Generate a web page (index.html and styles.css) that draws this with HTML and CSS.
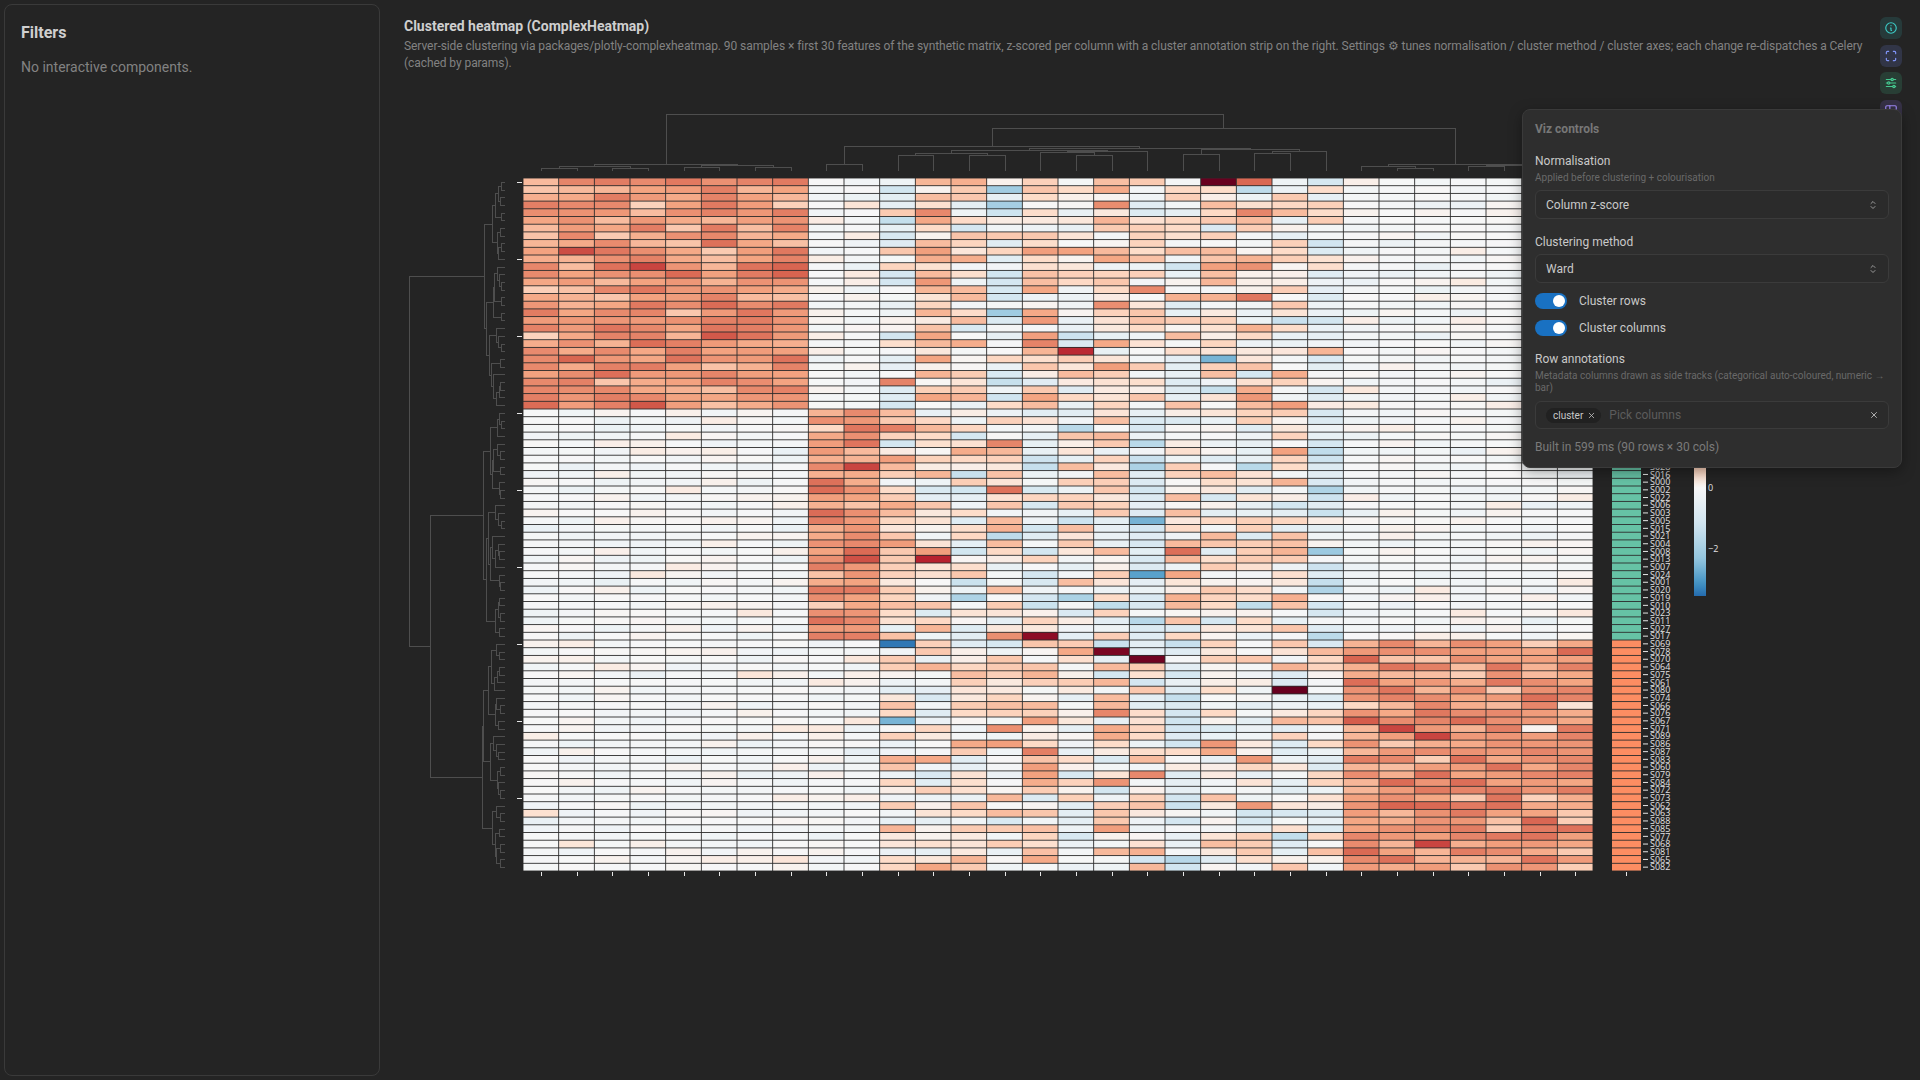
FILE: index.html
```html
<!DOCTYPE html>
<html lang="en">
<head>
<meta charset="utf-8">
<title>Clustered heatmap (ComplexHeatmap)</title>
<link rel="stylesheet" href="styles.css">
</head>
<body>
<div class="app">
  <aside class="sidebar">
    <h2 class="sidebar-title">Filters</h2>
    <p class="sidebar-empty">No interactive components.</p>
  </aside>
  <main class="main">
    <div class="content">
      <header class="viz-header">
        <h1 class="viz-title">Clustered heatmap (ComplexHeatmap)</h1>
        <p class="viz-desc">Server-side clustering via packages/plotly-complexheatmap. 90 samples × first 30 features of the synthetic matrix, z-scored per column with a cluster annotation strip on the right. Settings ⚙ tunes normalisation / cluster method / cluster axes; each change re-dispatches a Celery (cached by params).</p>
      </header>
      <svg id="hm" class="chart" xmlns="http://www.w3.org/2000/svg"></svg>
    </div>
    <div class="toolbar">
      <button class="tool tool-teal" aria-label="Info">
        <svg viewBox="0 0 24 24"><circle cx="12" cy="12" r="9"/><path d="M12 8h.01M11 12h1v4h1"/></svg>
      </button>
      <button class="tool tool-indigo" aria-label="Fullscreen">
        <svg viewBox="0 0 24 24"><path d="M4 8V6a2 2 0 0 1 2-2h2M4 16v2a2 2 0 0 0 2 2h2M16 4h2a2 2 0 0 1 2 2v2M16 20h2a2 2 0 0 0 2-2v-2"/></svg>
      </button>
      <button class="tool tool-green" aria-label="Settings">
        <svg viewBox="0 0 24 24"><circle cx="14" cy="6" r="2"/><path d="M4 6h8M16 6h4"/><circle cx="8" cy="12" r="2"/><path d="M4 12h2M10 12h10"/><circle cx="17" cy="18" r="2"/><path d="M4 18h11M19 18h1"/></svg>
      </button>
      <button class="tool tool-violet" aria-label="Data">
        <svg viewBox="0 0 24 24"><rect x="3" y="3" width="18" height="18" rx="2"/><path d="M3 10h18M10 3v18"/></svg>
      </button>
    </div>

    <section class="popover">
      <h3 class="pop-title">Viz controls</h3>

      <div class="field field-first">
        <div class="field-label">Normalisation</div>
        <div class="field-desc">Applied before clustering + colourisation</div>
        <div class="select select-after-desc">
          <span>Column z-score</span>
          <svg class="chev" viewBox="0 0 24 24"><path d="M8 9l4-4 4 4M16 15l-4 4-4-4"/></svg>
        </div>
      </div>

      <div class="field">
        <div class="field-label">Clustering method</div>
        <div class="select select-after-label">
          <span>Ward</span>
          <svg class="chev" viewBox="0 0 24 24"><path d="M8 9l4-4 4 4M16 15l-4 4-4-4"/></svg>
        </div>
      </div>

      <div class="switches">
        <div class="switch-row"><span class="switch"><span class="knob"></span></span><span class="switch-label">Cluster rows</span></div>
        <div class="switch-row"><span class="switch"><span class="knob"></span></span><span class="switch-label">Cluster columns</span></div>
      </div>

      <div class="field">
        <div class="field-label">Row annotations</div>
        <div class="field-desc field-desc-wrap">Metadata columns drawn as side tracks (categorical auto-coloured, numeric → bar)</div>
        <div class="multiselect">
          <span class="chip">cluster<svg class="chip-x" viewBox="0 0 24 24"><path d="M18 6L6 18M6 6l12 12"/></svg></span>
          <span class="placeholder">Pick columns</span>
          <svg class="clear-x" viewBox="0 0 24 24"><path d="M18 6L6 18M6 6l12 12"/></svg>
        </div>
      </div>

      <div class="built">Built in 599 ms (90 rows × 30 cols)</div>
    </section>
  </main>
</div>
<script src="script.js"></script>
</body>
</html>
```

FILE: styles.css
```css
* { box-sizing: border-box; }

html, body {
  margin: 0;
  background: #242424;
}

body {
  font-family: Roboto, "Liberation Sans", Arial, sans-serif;
  color: #c9c9c9;
  overflow: hidden;
}

.app {
  display: flex;
  gap: 24px;
  padding: 4px;
  height: 1080px;
}

/* Sidebar */
.sidebar {
  width: 376px;
  flex: none;
  border: 1px solid #3a3a3a;
  border-radius: 8px;
  padding: 17px 16px 16px;
}

.sidebar-title {
  margin: 0;
  font-size: 16px;
  line-height: 22px;
  font-weight: 700;
  color: #cfcfcf;
}

.sidebar-empty {
  margin: 13px 0 0;
  font-size: 14px;
  line-height: 20px;
  color: #828282;
}

/* Main */
.main {
  flex: 1;
  min-width: 0;
  position: relative;
  display: flex;
  gap: 4px;
  padding: 12px 14px 0 0;
}

.content {
  flex: 1;
  min-width: 0;
}

.viz-title {
  margin: 0;
  font-size: 14px;
  line-height: 20px;
  font-weight: 700;
  color: #cfcfcf;
}

.viz-desc {
  margin: 2px -4px 0 0;
  font-size: 12px;
  line-height: 17px;
  letter-spacing: -0.07px;
  color: #828282;
}

.chart {
  display: block;
  width: 100%;
  height: 840px;
  margin-top: 6px;
  overflow: visible;
}

/* Toolbar */
.toolbar {
  flex: none;
  display: flex;
  flex-direction: column;
  gap: 5.5px;
  padding-top: 1px;
}

.tool {
  width: 22px;
  height: 22px;
  padding: 0;
  border: 0;
  border-radius: 6px;
  display: flex;
  align-items: center;
  justify-content: center;
}

.tool svg {
  width: 14px;
  height: 14px;
  fill: none;
  stroke: currentColor;
  stroke-width: 2;
  stroke-linecap: round;
  stroke-linejoin: round;
}

.tool-teal { background: rgba(56, 201, 196, 0.14); color: #3cc9c4; }
.tool-indigo { background: rgba(116, 143, 252, 0.16); color: #8297fc; }
.tool-green { background: rgba(64, 201, 143, 0.16); color: #45c990; }
.tool-violet { background: rgba(151, 117, 250, 0.16); color: #a08af8; }

/* Popover */
.popover {
  position: absolute;
  top: 105px;
  right: 14px;
  width: 380px;
  z-index: 10;
  background: #2e2e2e;
  border: 1px solid #3a3a3a;
  border-radius: 8px;
  padding: 11px 12px 12px;
  box-shadow: 0 4px 14px rgba(0, 0, 0, 0.35);
}

.pop-title {
  margin: 0;
  font-size: 12px;
  line-height: 16px;
  font-weight: 700;
  color: #777777;
}

.field { margin-top: 15px; }
.field-first { margin-top: 16px; }

.field-label {
  font-size: 12px;
  line-height: 16px;
  color: #c9c9c9;
}

.field-desc {
  margin-top: 2px;
  font-size: 10px;
  line-height: 13px;
  color: #696969;
}

.field-desc-wrap {
  margin-top: 3px;
  line-height: 12px;
}

.select {
  height: 29px;
  border: 1px solid #3b3b3b;
  border-radius: 6px;
  background: #2b2b2b;
  display: flex;
  align-items: center;
  justify-content: space-between;
  padding: 0 9px 0 10px;
  font-size: 12px;
  color: #c9c9c9;
}

.select-after-desc { margin-top: 6px; }
.select-after-label { margin-top: 4px; }

.chev {
  width: 12px;
  height: 12px;
  fill: none;
  stroke: #9a9a9a;
  stroke-width: 2;
  stroke-linecap: round;
  stroke-linejoin: round;
}

.switches {
  margin-top: 10px;
  display: flex;
  flex-direction: column;
  gap: 11px;
}

.switch-row {
  display: flex;
  align-items: center;
  gap: 12px;
  height: 16px;
}

.switch {
  width: 32px;
  height: 16px;
  border-radius: 8px;
  background: #1971c2;
  display: flex;
  align-items: center;
  justify-content: flex-end;
  padding-right: 2px;
}

.knob {
  width: 12px;
  height: 12px;
  border-radius: 50%;
  background: #ffffff;
}

.switch-label {
  font-size: 12px;
  line-height: 16px;
  color: #c9c9c9;
}

.multiselect {
  margin-top: 7px;
  height: 28px;
  border: 1px solid #3b3b3b;
  border-radius: 6px;
  background: #2b2b2b;
  display: flex;
  align-items: center;
  padding: 0 9px 0 10px;
}

.chip {
  display: inline-flex;
  align-items: center;
  gap: 4px;
  height: 15px;
  padding: 0 5px 0 7px;
  border-radius: 8px;
  background: #212121;
  font-size: 10px;
  color: #c9c9c9;
}

.chip-x {
  width: 9px;
  height: 9px;
  fill: none;
  stroke: #c9c9c9;
  stroke-width: 2;
  stroke-linecap: round;
}

.placeholder {
  margin-left: 8px;
  flex: 1;
  font-size: 12px;
  color: #5c5c5c;
}

.clear-x {
  width: 10px;
  height: 10px;
  fill: none;
  stroke: #c9c9c9;
  stroke-width: 2;
  stroke-linecap: round;
}

.built {
  margin-top: 10px;
  font-size: 12px;
  line-height: 16px;
  color: #7a7a7a;
}

/* Chart text */
.hm-label {
  font-family: "Open Sans", "DejaVu Sans", Arial, sans-serif;
  font-size: 9px;
  fill: #e2e2e2;
}
```

FILE: script.js
```js
(function () {
  var NS = 'http://www.w3.org/2000/svg';
  var svg = document.getElementById('hm');
  var box = svg.getBoundingClientRect();
  svg.setAttribute('viewBox', box.left + ' ' + box.top + ' ' + box.width + ' ' + box.height);

  function mulberry(seed) {
    return function () {
      seed |= 0; seed = seed + 0x6D2B79F5 | 0;
      var t = Math.imul(seed ^ seed >>> 15, 1 | seed);
      t = t + Math.imul(t ^ t >>> 7, 61 | t) ^ t;
      return ((t ^ t >>> 14) >>> 0) / 4294967296;
    };
  }
  var rand = mulberry(20240611);
  function gauss() {
    var u = rand() || 1e-9, v = rand();
    return Math.sqrt(-2 * Math.log(u)) * Math.cos(2 * Math.PI * v);
  }
  function el(tag, attrs, parent) {
    var e = document.createElementNS(NS, tag);
    for (var k in attrs) e.setAttribute(k, attrs[k]);
    (parent || svg).appendChild(e);
    return e;
  }

  var X0 = 523, X1 = 1593, Y0 = 178, Y1 = 871, NC = 30, NR = 90;
  var CW = (X1 - X0) / NC, RH = (Y1 - Y0) / NR;

  var POS = [[0, [247, 247, 247]], [0.12, [253, 219, 199]], [0.35, [244, 165, 130]], [0.6, [214, 96, 77]], [0.8, [178, 24, 43]], [1, [103, 0, 31]]];
  var NEG = [[0, [247, 247, 247]], [0.3, [209, 229, 240]], [0.6, [146, 197, 222]], [0.8, [67, 147, 195]], [0.92, [33, 102, 172]], [1, [5, 48, 97]]];
  function color(v) {
    var s = v >= 0 ? POS : NEG;
    var t = Math.min(1, Math.abs(v) / (v >= 0 ? 4 : 3.9));
    for (var i = 1; i < s.length; i++) {
      if (t <= s[i][0]) {
        var a = s[i - 1], b = s[i], f = (t - a[0]) / (b[0] - a[0]);
        var c = [0, 1, 2].map(function (k) { return Math.round(a[1][k] + (b[1][k] - a[1][k]) * f); });
        return 'rgb(' + c.join(',') + ')';
      }
    }
    var l = s[s.length - 1][1];
    return 'rgb(' + l.join(',') + ')';
  }

  /* ---- data ---- */
  var bias = [];
  for (var g = 0; g < 3; g++) {
    bias[g] = [];
    for (var c = 0; c < NC; c++) bias[g][c] = 0.4 * gauss();
  }
  function value(r, c) {
    var g = r < 30 ? 0 : r < 60 ? 1 : 2;
    var hi = (g === 0 && c < 8) || (g === 1 && (c === 8 || c === 9)) || (g === 2 && c >= 23);
    if (hi) {
      var hv = 1.6 + 0.42 * gauss();
      return Math.min(hv, 2.7);
    }
    if (c >= 10 && c <= 22) return bias[g][c] + 0.62 * gauss();
    return -0.07 + 0.13 * gauss();
  }
  var data = [];
  for (var r = 0; r < NR; r++) {
    data[r] = [];
    for (var c2 = 0; c2 < NC; c2++) data[r][c2] = value(r, c2);
  }
  data[0][19] = 4.6; data[1][20] = -1.5; data[23][19] = -2.6; data[60][10] = -3.4;
  data[59][14] = 3.6; data[61][16] = 3.8; data[62][17] = 3.9; data[66][21] = 4.2;
  data[51][17] = -2.9; data[22][15] = 3.0; data[49][11] = 3.1; data[70][10] = -2.6;

  /* ---- cells ---- */
  el('rect', { x: X0, y: Y0, width: X1 - X0, height: Y1 - Y0, fill: '#2c2c2c' });
  var cells = el('g', {});
  for (var r2 = 0; r2 < NR; r2++) {
    for (var c3 = 0; c3 < NC; c3++) {
      el('rect', {
        x: (X0 + c3 * CW + 0.45).toFixed(2), y: (Y0 + r2 * RH + 0.45).toFixed(2),
        width: (CW - 0.9).toFixed(2), height: (RH - 0.9).toFixed(2),
        fill: color(data[r2][c3])
      }, cells);
    }
  }

  /* ---- annotation strip ---- */
  var AX0 = 1612, AX1 = 1641;
  el('rect', { x: AX0, y: Y0, width: AX1 - AX0, height: Y1 - Y0, fill: '#2c2c2c' });
  var ann = el('g', {});
  for (var r3 = 0; r3 < NR; r3++) {
    var col = r3 < 30 ? '#8da0cb' : r3 < 60 ? '#66c2a5' : '#fc8d62';
    el('rect', { x: AX0, y: (Y0 + r3 * RH + 0.45).toFixed(2), width: AX1 - AX0, height: (RH - 0.9).toFixed(2), fill: col }, ann);
  }

  /* ---- row labels ---- */
  var labels = [];
  var a030 = [];
  for (var i = 30; i < 60; i++) a030.push(i);
  for (var j = a030.length - 1; j > 0; j--) { var k = Math.floor(rand() * (j + 1)); var tmp = a030[j]; a030[j] = a030[k]; a030[k] = tmp; }
  a030.forEach(function (n) { labels.push(n); });
  [18, 29, 14, 26, 9, 12, 25, 28,
   16, 0, 2, 22, 6, 3, 5, 15, 21, 4, 8, 13, 7, 24, 1, 20, 19, 10, 23, 11, 27, 17,
   69, 78, 70, 64, 75, 61, 80, 74, 66, 76, 67, 71, 89, 86, 87, 83, 60, 79, 84, 72, 73, 62, 63, 88, 85, 77, 68, 81, 65, 82
  ].forEach(function (n) { labels.push(n); });

  var lab = el('g', {});
  var tk = el('g', { stroke: '#e6e6e6', 'stroke-width': 1 });
  for (var r4 = 0; r4 < NR; r4++) {
    var yc = Y0 + (r4 + 0.5) * RH;
    el('line', { x1: 1643, x2: 1648, y1: yc.toFixed(2), y2: yc.toFixed(2) }, tk);
    var t = el('text', { x: 1650, y: (yc + 3.2).toFixed(2), 'class': 'hm-label' }, lab);
    t.textContent = 'S' + ('00' + labels[r4]).slice(-3);
  }

  /* ---- axis ticks ---- */
  for (var r5 = 0; r5 < NR; r5 += 10) {
    var yt = Math.round(Y0 + (r5 + 0.5) * RH) + 0.5;
    el('line', { x1: 517, x2: 522, y1: yt, y2: yt }, tk);
  }
  for (var c4 = 0; c4 < NC; c4++) {
    var xt = Math.round(X0 + (c4 + 0.5) * CW) + 0.5;
    el('line', { x1: xt, x2: xt, y1: 872, y2: 876 }, tk);
  }
  el('line', { x1: 1626.5, x2: 1626.5, y1: 872, y2: 876 }, tk);

  /* ---- colorbar ---- */
  var defs = el('defs', {});
  var grad = el('linearGradient', { id: 'cbar', x1: 0, y1: 0, x2: 0, y2: 1 }, defs);
  var VT = 3.54;
  for (var s = 0; s <= 40; s++) {
    var v = VT - (2 * VT) * s / 40;
    el('stop', { offset: (s / 40).toFixed(3), 'stop-color': color(v) }, grad);
  }
  el('rect', { x: 1694, y: 380, width: 12, height: 216, fill: 'url(#cbar)' });
  var cl = [[2, '2'], [0, '0'], [-2, '\u22122']];
  cl.forEach(function (p) {
    var tt = el('text', { x: 1708, y: (488 - p[0] * 30.5 + 3.2).toFixed(1), 'class': 'hm-label' });
    tt.textContent = p[1];
  });

  /* ---- dendrograms ---- */
  function build(lo, hi, inc, jitter) {
    if (hi - lo === 1) return { p: lo + 0.5, h: 0 };
    var n = hi - lo, mid = lo + Math.floor(n / 2);
    var off = Math.round((rand() - 0.5) * n * jitter);
    var sp = Math.max(lo + 1, Math.min(hi - 1, mid + off));
    var a = build(lo, sp, inc, jitter), b = build(sp, hi, inc, jitter);
    return { p: (a.p + b.p) / 2, h: Math.max(a.h, b.h) + inc(n), a: a, b: b };
  }
  function scale(nd, f) { nd.h *= f; if (nd.a) { scale(nd.a, f); scale(nd.b, f); } }

  var dg = el('g', { stroke: '#4e4e4e', 'stroke-width': 1, fill: 'none', 'shape-rendering': 'crispEdges' });
  var R = function (x) { return Math.round(x) + 0.5; };

  // rows
  var RX = 504;
  function rowPaths(nd, out) {
    if (!nd.a) return;
    var ya = Y0 + nd.a.p * RH, yb = Y0 + nd.b.p * RH;
    out.push('M' + R(RX - nd.a.h) + ' ' + R(ya) + 'H' + R(RX - nd.h) + 'V' + R(yb) + 'H' + R(RX - nd.b.h));
    rowPaths(nd.a, out); rowPaths(nd.b, out);
  }
  var rowInc = function (n) { return n === 2 ? 3 + rand() * 3 : 1.2 + rand() * 3; };
  var tA = build(0, 30, rowInc, 0.45), tB = build(30, 60, rowInc, 0.45), tC = build(60, 90, rowInc, 0.45);
  scale(tA, 20 / tA.h); scale(tB, 21 / tB.h); scale(tC, 22 / tC.h);
  var rp = [];
  rowPaths(tA, rp); rowPaths(tB, rp); rowPaths(tC, rp);
  var yA = Y0 + tA.p * RH, yB = Y0 + tB.p * RH, yC = Y0 + tC.p * RH, yBC = (yB + yC) / 2;
  rp.push('M' + R(RX - tB.h) + ' ' + R(yB) + 'H' + R(430) + 'V' + R(yC) + 'H' + R(RX - tC.h));
  rp.push('M' + R(RX - tA.h) + ' ' + R(yA) + 'H' + R(409) + 'V' + R(yBC) + 'H' + R(430));
  el('path', { d: rp.join('') }, dg);

  // columns
  var CY = 170;
  function colPaths(nd, out) {
    if (!nd.a) return;
    var xa = X0 + nd.a.p * CW, xb = X0 + nd.b.p * CW;
    out.push('M' + R(xa) + ' ' + R(CY - nd.a.h) + 'V' + R(CY - nd.h) + 'H' + R(xb) + 'V' + R(CY - nd.b.h));
    colPaths(nd.a, out); colPaths(nd.b, out);
  }
  var flatInc = function (n) { return n === 2 ? 1.5 + rand() * 1.5 : 0.5 + rand(); };
  var noisyInc = function (n) { return n === 2 ? 14 + rand() * 3 : 0.8 + rand() * 1.8; };
  var cA = build(0, 8, flatInc, 0), cB = build(8, 10, flatInc, 0), cC = build(10, 23, noisyInc, 0.45), cD = build(23, 30, flatInc, 0);
  scale(cA, 6 / cA.h); scale(cB, 6 / cB.h); scale(cD, 6 / cD.h);
  var cp = [];
  colPaths(cA, cp); colPaths(cB, cp); colPaths(cC, cp); colPaths(cD, cp);
  var xA = X0 + cA.p * CW, xB = X0 + cB.p * CW, xC = X0 + cC.p * CW, xD = X0 + cD.p * CW;
  var hBC = Math.max(cC.h, cB.h) + 1.5, xBC = (xB + xC) / 2;
  var hBCD = 42, xBCD = (xBC + xD) / 2;
  var hRoot = 56;
  cp.push('M' + R(xB) + ' ' + R(CY - cB.h) + 'V' + R(CY - hBC) + 'H' + R(xC) + 'V' + R(CY - cC.h));
  cp.push('M' + R(xBC) + ' ' + R(CY - hBC) + 'V' + R(CY - hBCD) + 'H' + R(xD) + 'V' + R(CY - cD.h));
  cp.push('M' + R(xA) + ' ' + R(CY - cA.h) + 'V' + R(CY - hRoot) + 'H' + R(xBCD) + 'V' + R(CY - hBCD));
  el('path', { d: cp.join('') }, dg);
})();
```
